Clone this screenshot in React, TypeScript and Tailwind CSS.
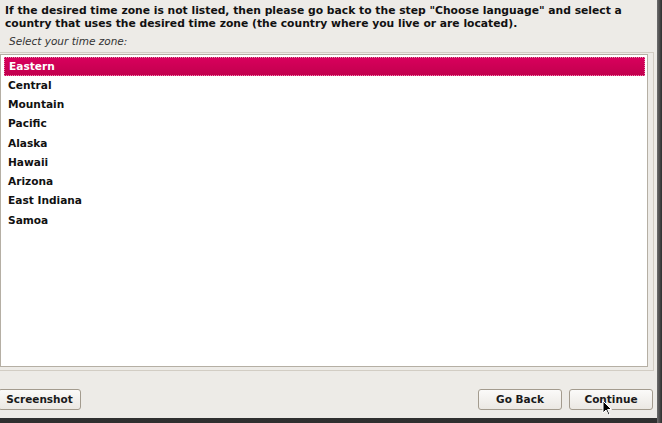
import React from 'react';

const zones = ['Eastern', 'Central', 'Mountain', 'Pacific', 'Alaska', 'Hawaii', 'Arizona', 'East Indiana', 'Samoa'];

function Button({ label, className }: { label: string; className?: string }) {
  return (
    <button
      className={`h-[21px] rounded-[3px] border border-[#a39b8e] bg-gradient-to-b from-[#fbfaf9] to-[#ebe8e3] text-[10.5px] font-bold text-[#1a1a1a] ${className ?? ''}`}
    >
      {label}
    </button>
  );
}

export default function App() {
  const selected = 0;

  return (
    <div
      className="relative h-[423px] w-[662px] overflow-hidden bg-gradient-to-b from-[#5d5d5d] to-[#2f2f2f]"
      style={{ fontFamily: '"DejaVu Sans", Verdana, sans-serif' }}
    >
      <div className="flex h-[418px] w-[657px] flex-col bg-[#edebe7]">
        <p className="whitespace-nowrap pl-[5px] pt-[5px] text-[10.75px] font-bold leading-[12.5px] text-[#111]">
          If the desired time zone is not listed, then please go back to the step "Choose language" and select a
          <br />
          country that uses the desired time zone (the country where you live or are located).
        </p>
        <div className="pl-[9px] pt-[5px] text-[10.5px] italic leading-[13px] text-[#333]">Select your time zone:</div>

        <div className="mt-[4px] h-[319px] w-[654px] border border-l-0 border-[#d2cdc4] pb-[3px] pr-[5px] pt-[1px]">
          <div className="h-full w-[648px] border border-[#b5afa4] bg-white py-[2px] pl-[3px] pr-[2px]">
            {zones.map((zone, i) => (
              <div
                key={zone}
                className={`flex h-[19.25px] items-center pl-[4px] text-[10.6px] font-bold ${
                  i === selected
                    ? 'border border-dotted border-[#e889ad] bg-gradient-to-b from-[#d8005c] to-[#c2004e] pl-[3px] text-white'
                    : 'text-[#111]'
                }`}
              >
                {zone}
              </div>
            ))}
          </div>
        </div>

        <div className="mt-[18px] flex items-center pr-[4px]">
          <Button label="Screenshot" className="-ml-[2px] w-[83px]" />
          <div className="flex-1" />
          <Button label="Go Back" className="w-[84px]" />
          <Button label="Continue" className="ml-[7px] w-[84px]" />
        </div>
      </div>
      <div className="absolute right-0 top-0 h-full w-[5px] bg-gradient-to-r from-[#6e6e6e] to-[#2e2e2e]" />

      {/* mouse pointer */}
      <svg className="absolute left-[602px] top-[400px]" width="10" height="16" viewBox="0 0 10 16">
        <path d="M1 1 L1 13 L4 10 L6.5 15 L8 14.3 L5.6 9.5 L9.5 9.5 Z" fill="#000" stroke="#fff" strokeWidth="1" />
      </svg>
    </div>
  );
}
